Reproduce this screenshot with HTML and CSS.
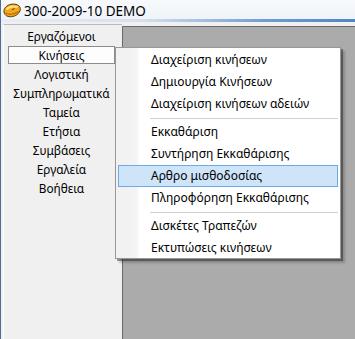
FILE: index.html
```html
<!DOCTYPE html>
<html lang="el">
<head>
    <meta charset="UTF-8">
    <title>300-2009-10 DEMO</title>
    <link rel="stylesheet" href="styles.css">
</head>
<body>
    <div class="window">
        <div class="titlebar">
            <svg class="app-icon" width="18" height="15" viewBox="0 0 18 15">
                <path d="M1 9 C0.5 5.5 3.5 2 8.5 1.2 C13 0.6 17 2.2 17.3 5.5 C17.6 9 14.5 12.5 9.5 13.6 C5 14.4 1.5 12.5 1 9 Z" fill="#f2a71c" stroke="#5a3a08" stroke-width="1"/>
                <path d="M3.5 6.5 C6 3.8 10.5 3 14.5 4.2" fill="none" stroke="#ffe680" stroke-width="1.8"/>
                <path d="M2.5 10 C6 11.8 11 11.6 15.5 8.5" fill="none" stroke="#b86a0c" stroke-width="1.2"/>
                <path d="M9 7 L11.5 5.5" fill="none" stroke="#5a3a08" stroke-width="1"/>
            </svg>
            <span class="title">300-2009-10 DEMO</span>
        </div>

        <div class="main">
            <div class="sidebar">
                <div class="side-item header">Εργαζόμενοι</div>
                <div class="side-item active">Κινήσεις</div>
                <div class="side-item">Λογιστική</div>
                <div class="side-item">Συμπληρωματικά</div>
                <div class="side-item">Ταμεία</div>
                <div class="side-item">Ετήσια</div>
                <div class="side-item">Συμβάσεις</div>
                <div class="side-item">Εργαλεία</div>
                <div class="side-item">Βοήθεια</div>
            </div>
            <div class="mdi"></div>
        </div>

        <!-- Popup menu of Κινήσεις -->
        <div class="popup">
            <div class="menu-item">Διαχείριση κινήσεων</div>
            <div class="menu-item">Δημιουργία Κινήσεων</div>
            <div class="menu-item">Διαχείριση κινήσεων αδειών</div>
            <div class="separator"></div>
            <div class="menu-item">Εκκαθάριση</div>
            <div class="menu-item">Συντήρηση Εκκαθάρισης</div>
            <div class="menu-item hover">Αρθρο μισθοδοσίας</div>
            <div class="menu-item">Πληροφόρηση Εκκαθάρισης</div>
            <div class="separator"></div>
            <div class="menu-item">Δισκέτες Τραπεζών</div>
            <div class="menu-item">Εκτυπώσεις κινήσεων</div>
        </div>
    </div>
</body>
</html>
```

FILE: styles.css
```css
body {
    margin: 0;
    width: 355px;
    height: 339px;
    overflow: hidden;
    font-family: "Noto Sans", "DejaVu Sans", sans-serif;
    background-color: #f0f0f0;
    color: #000;
}

.window {
    position: relative;
    height: 339px;
    border-left: 1px solid #4d6e96;
    box-sizing: border-box;
}

.titlebar {
    height: 22px;
    display: flex;
    align-items: center;
    padding-left: 2px;
    box-sizing: border-box;
    background: linear-gradient(#f7f9fc, #eef3f9);
    position: relative;
}

.titlebar::after {
    content: "";
    position: absolute;
    left: 0;
    right: 0;
    bottom: 0;
    height: 3px;
    background: linear-gradient(to right, #e8edf3 0%, #d6e0ec 40%, #6f9bd0 75%, #4f86c6 100%);
}

.app-icon {
    margin-top: -2px;
}

.title {
    margin-left: 3px;
    margin-top: -1px;
    font-family: "Noto Sans", "DejaVu Sans", sans-serif;
    font-size: 13.5px;
    color: #000;
}

.main {
    display: flex;
    height: 317px;
    padding-left: 2px;
    padding-top: 2px;
    box-sizing: border-box;
}

.sidebar {
    width: 119px;
    border-top: 1px solid #b9b9b9;
    border-left: 1px solid #ffffff;
    box-sizing: border-box;
    padding-top: 2px;
}

.side-item {
    width: 107px;
    margin-left: 4px;
    height: 19px;
    line-height: 19px;
    text-align: center;
    font-size: 11.8px;
    box-sizing: border-box;
}

.side-item.active {
    background-color: #fdfdfd;
    border: 1px solid #8c8c8c;
    height: 18px;
    line-height: 16px;
    margin-bottom: 1px;
}

.mdi {
    flex: 1;
    margin-top: 2px;
    background-color: #ababab;
    border-top: 1px solid #6a6a6a;
    border-left: 1px solid #6a6a6a;
}

/* Popup */
.popup {
    position: absolute;
    left: 114px;
    top: 47px;
    width: 226px;
    height: 212px;
    box-sizing: border-box;
    padding: 1px 2px;
    background: linear-gradient(to right, #f1f1f1 0px, #f4f4f4 20px, #ffffff 24px);
    border: 1px solid #979797;
    box-shadow: 2px 2px 0 rgba(0, 0, 0, 0.35), 4px 4px 2px rgba(0, 0, 0, 0.2);
}

.menu-item {
    height: 22px;
    line-height: 22px;
    padding-left: 33px;
    font-size: 12px;
    box-sizing: border-box;
    white-space: nowrap;
}

.menu-item.hover {
    background-color: #cde4f9;
    border: 1px solid #70aae6;
    line-height: 20px;
    padding-left: 32px;
}

.separator {
    height: 6px;
    margin-left: 32px;
    position: relative;
}

.separator::after {
    content: "";
    position: absolute;
    left: 0;
    right: 0;
    top: 3px;
    border-top: 1px solid #d0d0d0;
}
```
